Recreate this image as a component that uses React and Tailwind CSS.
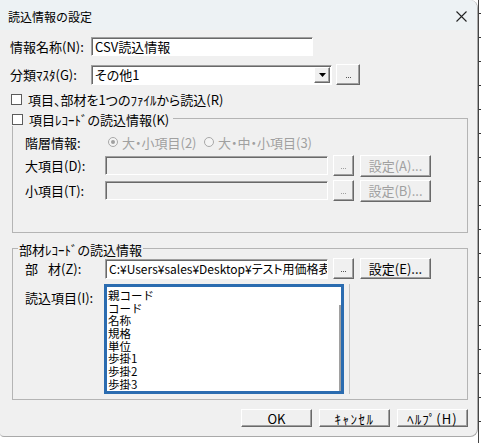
import React from 'react';

const raised = 'bg-[#f0f0f0] border border-t-white border-l-white border-b-[#696969] border-r-[#696969] shadow-[inset_-1px_-1px_0_#a0a0a0]';
const sunken = 'border border-t-[#a0a0a0] border-l-[#a0a0a0] border-b-white border-r-white shadow-[inset_1px_1px_0_#696969]';

function Btn({ children, disabled, className = '' }) {
  return (
    <div className={`${raised} flex items-center justify-center leading-none ${disabled ? 'text-[#a0a0a0]' : 'text-black'} ${className}`}>
      {children}
    </div>
  );
}

function Dots({ disabled, className = '' }) {
  const dot = disabled ? 'bg-[#a0a0a0]' : 'bg-[#555]';
  return (
    <Btn disabled={disabled} className={`w-[21px] h-[21px] ${className}`}>
      <span className="flex gap-[1px] mt-[6px]">
        <i className={`w-[1px] h-[1px] ${dot}`} />
        <i className={`w-[1px] h-[1px] ${dot}`} />
        <i className={`w-[1px] h-[1px] ${dot}`} />
      </span>
    </Btn>
  );
}

function Check() {
  return <div className="w-[11px] h-[11px] bg-white border border-[#5c5c5c] shrink-0" />;
}

function Radio({ checked }) {
  return (
    <div className="w-[10px] h-[10px] rounded-full border border-[#a8a8a8] bg-[#f4f4f4] flex items-center justify-center shrink-0">
      {checked && <div className="w-[4px] h-[4px] rounded-full bg-[#a0a0a0]" />}
    </div>
  );
}

const items = ['親コード', 'コード', '名称', '規格', '単位', '歩掛1', '歩掛2', '歩掛3'];

export default function App() {
  return (
    <div className="w-[481px] h-[443px] bg-white flex overflow-hidden font-['Noto_Sans_CJK_JP','Noto_Sans',sans-serif] text-black">
      <div className="w-[478px] h-[437px] bg-[#f0f0f0] rounded-tr-[8px] rounded-br-[8px] rounded-bl-[4px] border-r border-b border-[#a9a9a9] flex flex-col shrink-0">
        {/* title bar */}
        <div className="h-[30px] bg-[#edf2f4] rounded-tr-[8px] flex items-center justify-between pt-[3px] pl-[8px] pr-[9px]">
          <span className="text-[12px] leading-none">読込情報の設定</span>
          <svg width="11" height="11" viewBox="0 0 11 11" className="mr-[1px]">
            <path d="M0.5 0.5 L10.5 10.5 M10.5 0.5 L0.5 10.5" stroke="#222" strokeWidth="1.1" />
          </svg>
        </div>

        <div className="pl-[10px] flex flex-col text-[13px] leading-none [font-feature-settings:'palt']">
          {/* 情報名称 */}
          <div className="mt-[7px] flex items-center h-[19px]">
            <span className="w-[81px]">情報名称(N):</span>
            <div className={`${sunken} w-[222px] h-[19px] bg-white flex items-center pl-[3px]`}>CSV読込情報</div>
          </div>

          {/* 分類マスタ */}
          <div className="mt-[8px] flex items-center h-[21px]">
            <span className="w-[81px]">分類ﾏｽﾀ(G):</span>
            <div className={`${sunken} w-[241px] h-[20px] bg-white flex items-center justify-between pl-[3px] pr-[1px]`}>
              <span>その他1</span>
              <div className={`${raised} w-[16px] h-[16px] flex items-center justify-center`}>
                <svg width="7" height="4" viewBox="0 0 7 4"><path d="M0 0 H7 L3.5 4 Z" fill="#000" /></svg>
              </div>
            </div>
            <Dots className="ml-[4px] w-[24px]" />
          </div>

          {/* checkbox 1 */}
          <div className="mt-[8px] flex items-center h-[12px] gap-[6px] pl-[1px]">
            <Check />
            <span>項目、部材を1つのﾌｧｲﾙから読込(R)</span>
          </div>

          {/* group 1 */}
          <div className="relative mt-[13px] ml-[2px] w-[456px] h-[115px] border border-[#b4b4b4] flex flex-col">
            <div className="absolute left-[-2px] top-[-7px] h-[14px] bg-[#f0f0f0] flex items-center gap-[6px] pl-[1px] pr-[4px]">
              <Check />
              <span className="whitespace-nowrap">項目ﾚｺｰﾄﾞの読込情報(K)</span>
            </div>
            <div className="mt-[16px] pl-[12px] flex items-center h-[14px]">
              <span className="w-[83px]">階層情報:</span>
              <Radio checked />
              <span className="ml-[4px] w-[82px] text-[#a0a0a0]">大・小項目(2)</span>
              <Radio />
              <span className="ml-[4px] text-[#a0a0a0]">大・中・小項目(3)</span>
            </div>
            <div className="mt-[6px] pl-[12px] flex items-center h-[21px]">
              <span className="w-[80px]">大項目(D):</span>
              <div className={`${sunken} w-[223px] h-[19px] bg-[#f0f0f0]`} />
              <Dots disabled className="ml-[5px]" />
              <Btn disabled className="ml-[6px] w-[71px] h-[22px] text-[13px]">設定(A)...</Btn>
            </div>
            <div className="mt-[4px] pl-[12px] flex items-center h-[21px]">
              <span className="w-[80px]">小項目(T):</span>
              <div className={`${sunken} w-[223px] h-[19px] bg-[#f0f0f0]`} />
              <Dots disabled className="ml-[5px]" />
              <Btn disabled className="ml-[6px] w-[71px] h-[22px] text-[13px]">設定(B)...</Btn>
            </div>
          </div>

          {/* group 2 */}
          <div className="relative mt-[15px] ml-[2px] w-[456px] h-[152px] border border-[#b4b4b4] flex flex-col">
            <div className="absolute left-[5px] top-[-7px] h-[14px] bg-[#f0f0f0] flex items-center px-[1px]">
              <span className="whitespace-nowrap">部材ﾚｺｰﾄﾞの読込情報</span>
            </div>
            <div className="mt-[9px] pl-[12px] flex items-center h-[21px]">
              <span className="w-[80px] flex">
                <span>部</span>
                <span className="ml-[10px]">材(Z):</span>
              </span>
              <div className={`${sunken} w-[223px] h-[20px] bg-white flex items-center pl-[3px] overflow-hidden whitespace-nowrap text-[12px]`}>
                C:¥Users¥sales¥Desktop¥テスト用価格表
              </div>
              <Dots className="ml-[5px]" />
              <Btn className="ml-[6px] w-[71px] h-[21px] text-[13px]">設定(E)...</Btn>
            </div>
            <div className="mt-[5px] pl-[12px] flex items-start">
              <span className="w-[79px] mt-[7px]">読込項目(I):</span>
              <div className="flex w-[246px] h-[110px] border-r border-[#c4c4c4]">
                <div className="w-[240px] h-[110px] border-[3px] border-[#2b6cb0] bg-white flex">
                  <div className="flex-1 flex flex-col pl-[1px] pt-[2px] text-[11.5px] leading-[12.7px] [font-feature-settings:normal]">
                    {items.map(it => (
                      <span key={it} className="h-[12.7px]">{it}</span>
                    ))}
                  </div>
                  <div className="w-[2px] mt-[18px] bg-[#a0a0a0]" />
                </div>
              </div>
            </div>
          </div>

          {/* footer buttons */}
          <div className="mt-[9px] flex justify-end gap-[7px] pr-[9px] text-[13px] [font-feature-settings:normal]">
            <Btn className="w-[71px] h-[18px]">OK</Btn>
            <Btn className="w-[71px] h-[18px] tracking-[1.5px]">ｷｬﾝｾﾙ</Btn>
            <Btn className="w-[71px] h-[18px] tracking-[1px]">ﾍﾙﾌﾟ(H)</Btn>
          </div>
        </div>
      </div>

      {/* background app edge */}
      <div className="w-[3px] h-[443px] border-l border-[#444] flex flex-col pt-[13px]">
        {Array.from({ length: 18 }).map((_, i) => (
          <div key={i} className="h-[24px] border-t border-[#333] shrink-0" />
        ))}
      </div>
    </div>
  );
}
